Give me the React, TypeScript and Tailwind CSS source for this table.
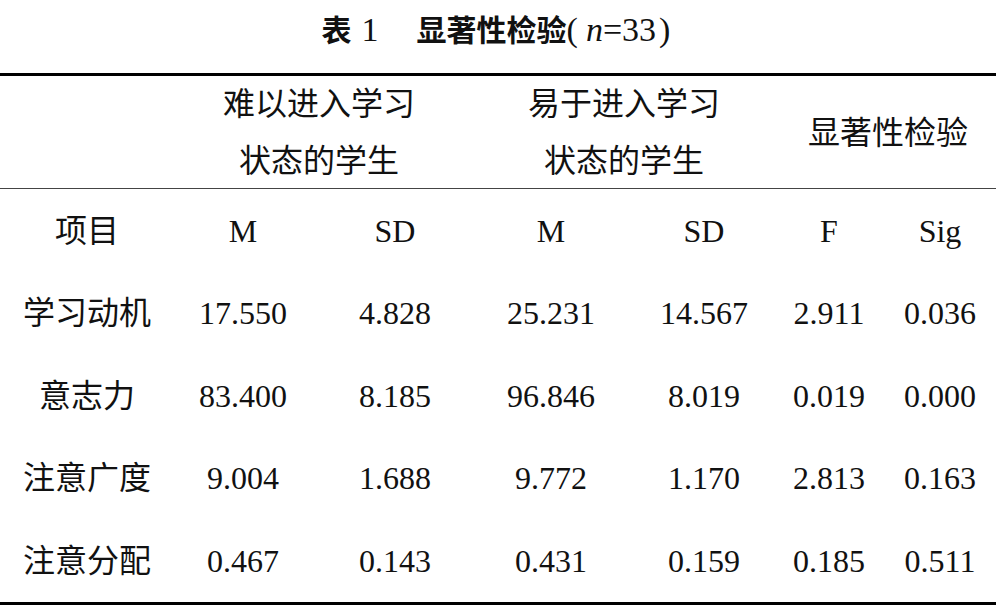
import React, { FC } from "react";

interface RowData {
  label: string;
  values: string[];
}

const rows: RowData[] = [
  { label: "学习动机", values: ["17.550", "4.828", "25.231", "14.567", "2.911", "0.036"] },
  { label: "意志力", values: ["83.400", "8.185", "96.846", "8.019", "0.019", "0.000"] },
  { label: "注意广度", values: ["9.004", "1.688", "9.772", "1.170", "2.813", "0.163"] },
  { label: "注意分配", values: ["0.467", "0.143", "0.431", "0.159", "0.185", "0.511"] },
];

const gridCols = "grid grid-cols-[167px_152px_152px_160px_146px_104px_118px]";

const serif = "font-['Liberation_Serif','Noto_Sans_CJK_SC',serif]";

const TableRow: FC<{ label: string; values: string[] }> = ({ label, values }) => (
  <div className={`${gridCols} h-[82.5px] items-center`}>
    <div className="pl-[7px] text-center">{label}</div>
    {values.map((v, i) => (
      <div key={i} className="text-center">
        {v}
      </div>
    ))}
  </div>
);

const App: FC = () => {
  return (
    <div className={`h-[605px] w-[999px] overflow-hidden bg-white text-[32px] leading-none text-[#111] ${serif}`}>
      {/* title */}
      <div className="flex h-[73px] items-baseline justify-center pt-[12px] pr-[7px] text-[34px] leading-[32px]">
        <span className="font-['Noto_Sans_CJK_SC',sans-serif] text-[30px] font-bold">表</span>
        <span className="ml-[10px]">1</span>
        <span className="ml-[38px] font-['Noto_Sans_CJK_SC',sans-serif] text-[30px] font-bold">显著性检验</span>
        <span>(</span>
        <span className="ml-[8px] italic">n</span>
        <span>=33</span>
        <span className="ml-[3px]">)</span>
      </div>

      <div className="w-[996px] border-t-[3.5px] border-b-[3.5px] border-black">
        {/* grouped header */}
        <div className={`${gridCols} h-[112.5px] items-center border-b border-[#444]`}>
          <div />
          <div className="col-span-2 text-center leading-[57px]">
            难以进入学习
            <br />
            状态的学生
          </div>
          <div className="col-span-2 text-center leading-[57px]">
            易于进入学习
            <br />
            状态的学生
          </div>
          <div className="col-span-2 text-center">显著性检验</div>
        </div>

        <div className="pt-[1px]">
          <TableRow label="项目" values={["M", "SD", "M", "SD", "F", "Sig"]} />
          {rows.map((r) => (
            <TableRow key={r.label} label={r.label} values={r.values} />
          ))}
        </div>
      </div>
    </div>
  );
};

export default App;
